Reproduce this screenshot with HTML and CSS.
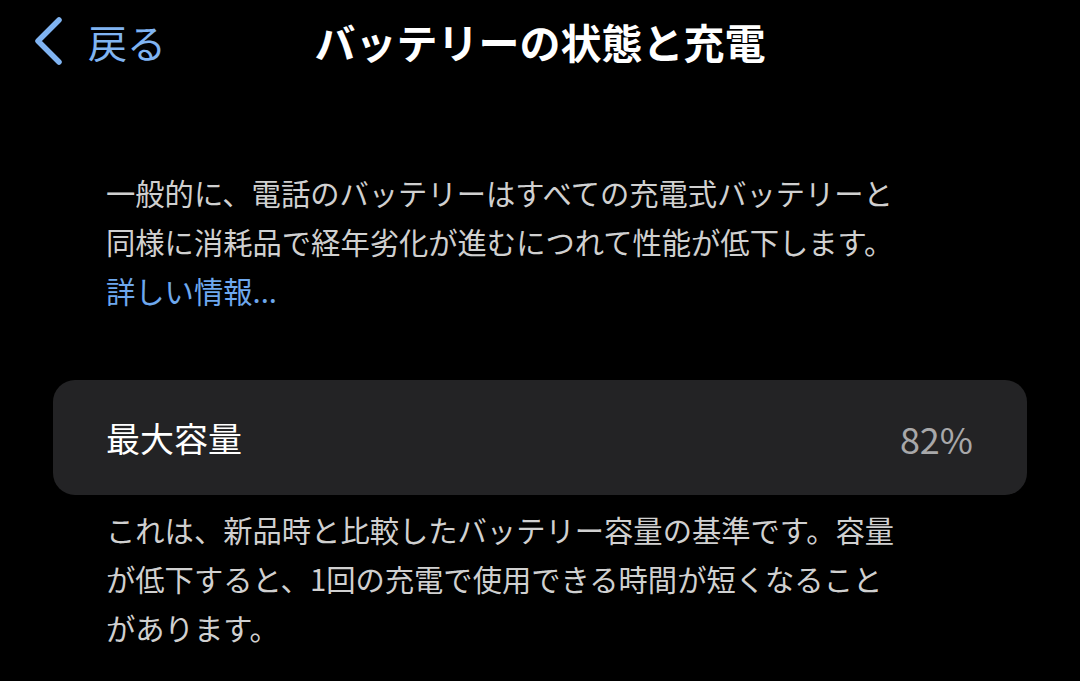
FILE: index.html
```html
<!DOCTYPE html>
<html lang="ja">
<head>
<meta charset="utf-8">
<link rel="stylesheet" href="styles.css">
</head>
<body>
<header class="nav">
  <a class="back">
    <svg class="chev" width="30" height="50" viewBox="0 0 30 50"><polyline points="25,4 4,25 25,46" fill="none" stroke="currentColor" stroke-width="5.5" stroke-linecap="round" stroke-linejoin="round"/></svg>
    <span class="back-label">戻る</span>
  </a>
  <h1 class="title">バッテリーの状態と充電</h1>
  <div></div>
</header>
<main class="content">
  <p class="intro">一般的に、電話のバッテリーはすべての充電式バッテリーと<br>同様に消耗品で経年劣化が進むにつれて性能が低下します。<br><a class="link">詳しい情報...</a></p>
  <section class="card">
    <span class="card-label">最大容量</span>
    <span class="card-value">82%</span>
  </section>
  <p class="footnote">これは、新品時と比較したバッテリー容量の基準です。容量<br>が低下すると、1回の充電で使用できる時間が短くなること<br>があります。</p>
</main>
</body>
</html>
```
FILE: styles.css
```css
html, body {
  margin: 0;
  padding: 0;
  background: #000;
  width: 1080px;
  height: 681px;
  overflow: hidden;
  font-family: "Noto Sans CJK JP", "Noto Sans", sans-serif;
}
.nav {
  display: grid;
  grid-template-columns: 1fr auto 1fr;
  align-items: center;
  height: 82px;
}
.back {
  display: flex;
  align-items: center;
  color: #80b4f2;
  padding-left: 34px;
  gap: 24px;
}
.chev { display: block; }
.back-label {
  font-size: 39px;
  line-height: 1;
}
.title {
  margin: 0;
  color: #fff;
  font-size: 41px;
  font-weight: 700;
  line-height: 1;
}
.content {
  padding: 0 53px;
}
.intro, .footnote {
  margin: 0;
  padding-left: 53px;
  color: #d0d0d0;
  font-size: 29.3px;
  line-height: 49px;
}
.intro { margin-top: 86px; }
.link { color: #6ea8ee; }
.card {
  margin-top: 65px;
  height: 115px;
  background: #232325;
  border-radius: 22px;
  display: flex;
  align-items: center;
  justify-content: space-between;
  padding: 0 54px 0 53px;
}
.card-label {
  color: #fff;
  font-size: 34px;
}
.card-value {
  color: #a8a8aa;
  font-size: 36px;
}
.footnote { margin-top: 10px; }
```
